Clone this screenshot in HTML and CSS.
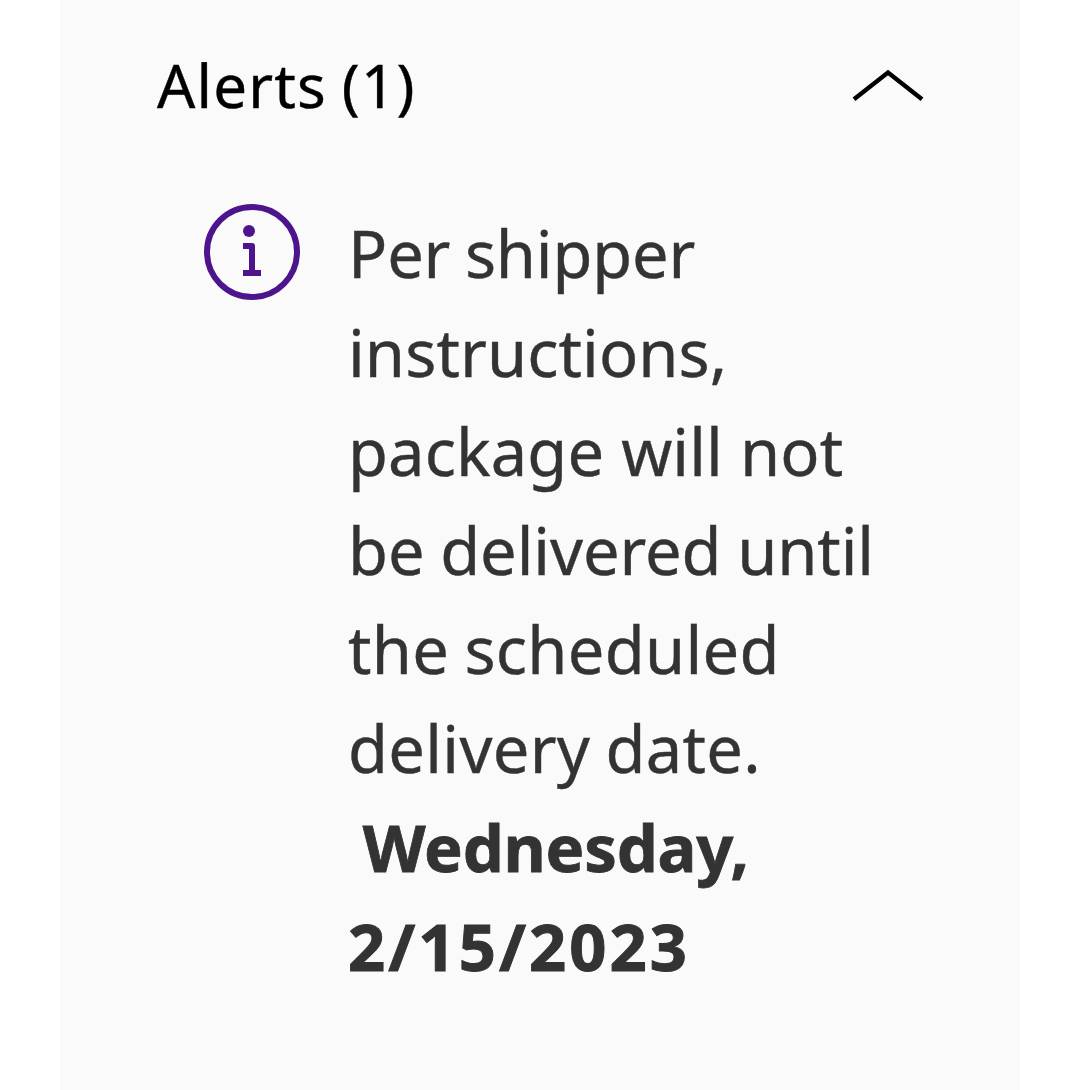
FILE: index.html
```html
<!DOCTYPE html>
<html lang="en">
<head>
	<meta charset="UTF-8">
	<title>Alerts</title>
	<link rel="stylesheet" href="styles.css">
</head>
<body>
	<div class="alerts">
		<div class="alerts-header">
			<h2 class="alerts-title">Alerts (1)</h2>
			<svg class="alerts-arrow" width="72" height="36" viewBox="0 0 72 36">
				<path d="M2 33.2L36 6.6L70 33.2" fill="none" stroke="#000" stroke-width="4.4"/>
			</svg>
		</div>
		<div class="alerts-item">
			<svg class="alerts-icon" width="96" height="96" viewBox="0 0 96 96">
				<circle cx="48" cy="48" r="45" fill="none" stroke="#4d148c" stroke-width="6"/>
				<circle cx="45" cy="27" r="6" fill="#4d148c"/>
				<path d="M39 39H48Q51 39 51 42V66H57V72H39V66H45V45H39Z" fill="#4d148c"/>
			</svg>
			<p class="alerts-text">
				<span class="line line1">Per shipper</span>
				<span class="line line2">instructions,</span>
				<span class="line line2">package will not</span>
				<span class="line line4">be delivered until</span>
				<span class="line line5">the scheduled</span>
				<span class="line line5">delivery date.</span>
				<b class="line line7">&nbsp;Wednesday,</b>
				<b class="line line8">2/15/2023</b>
			</p>
		</div>
	</div>
</body>
</html>
```

FILE: styles.css
```css
*{
	margin: 0;
	padding: 0;
}
body{
	background-color: #fff;
	font-family: "Noto Sans", sans-serif;
}
.alerts{
	box-sizing: border-box;
	min-height: 1090px;
	margin: 0 60px;
	padding: 42px 96px 0 97px;
	background-color: #fafafa;
}
.alerts-header{
	display: flex;
	justify-content: space-between;
	height: 88px;
}
.alerts-title{
	font-size: 60px;
	line-height: 87px;
	font-weight: 400;
	letter-spacing: 1.2px;
	word-spacing: -2px;
	color: #000;
	-webkit-text-stroke: 0.4px #000;
}
.alerts-arrow{
	margin-top: 24px;
}
.alerts-item{
	display: flex;
	gap: 48px;
	padding: 74px 0 0 47px;
}
.alerts-icon{
	flex: none;
}
.alerts-text{
	font-size: 65px;
	line-height: 99px;
	color: #333;
	white-space: nowrap;
	-webkit-text-stroke: 0.4px #333;
}
.line{
	display: block;
}
.line1{
	letter-spacing: -0.2px;
	word-spacing: -2px;
}
.line2{
	letter-spacing: 0.1px;
}
.line4{
	letter-spacing: -0.1px;
	word-spacing: -1px;
}
.line5{
	letter-spacing: 0.3px;
	word-spacing: -2px;
}
.line7{
	margin-left: -2px;
	letter-spacing: -0.2px;
	-webkit-text-stroke: 0.8px #333;
}
.line8{
	letter-spacing: 3.1px;
	-webkit-text-stroke: 1px #333;
}
```
